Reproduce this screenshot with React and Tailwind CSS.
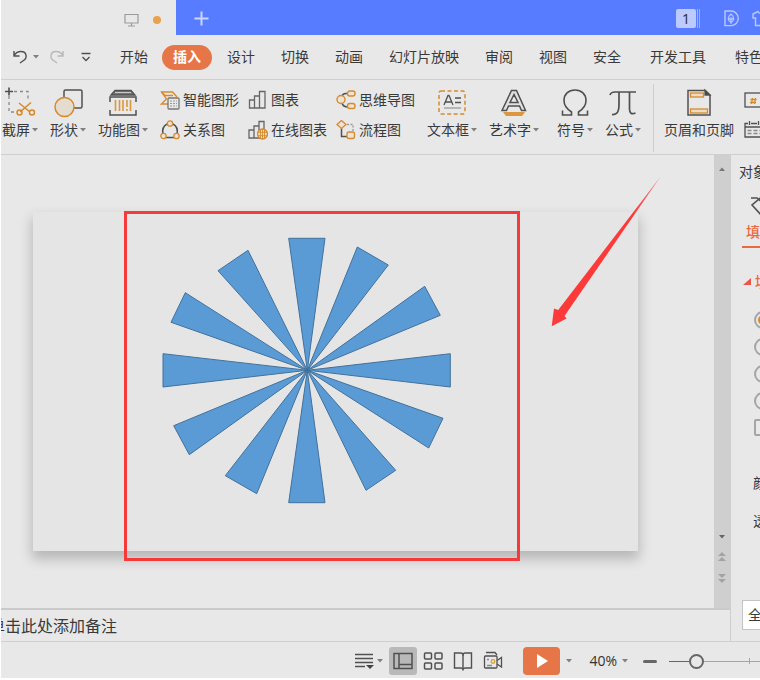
import React from "react";

const menuTabs = ["设计", "切换", "动画", "幻灯片放映", "审阅", "视图", "安全"];

const blades = [
  "255.7,26.3 292,26.3",
  "324.3,35 355.3,53",
  "391.7,74.3 407.3,103.3",
  "417.3,141.7 417.3,175",
  "410,206.3 395.7,236",
  "362.7,258.3 333,278.3",
  "292,290.7 255.7,290.7",
  "223.7,281.7 192.3,263.7",
  "156.3,242.7 140.7,213.7",
  "130,175 130,141.7",
  "138,110.3 152.3,80.7",
  "185,58.7 215,38.3",
];

const Caret = ({ className = "text-[#808080]" }) => (
  <svg width="6" height="4" viewBox="0 0 6 4" className={`shrink-0 ${className}`}>
    <path d="M0 0h6L3 3.5z" fill="currentColor" />
  </svg>
);

const Icon = ({ w = 32, h = 32, children, className = "" }) => (
  <svg
    width={w}
    height={h}
    viewBox={`0 0 ${w} ${h}`}
    fill="none"
    stroke="#505050"
    strokeWidth="1.3"
    className={`shrink-0 ${className}`}
  >
    {children}
  </svg>
);

const BigTool = ({ label, caret = true, children }) => (
  <button className="flex shrink-0 flex-col items-center whitespace-nowrap">
    {children}
    <span className="flex h-6 items-center gap-[2px]">
      {label}
      {caret && <Caret />}
    </span>
  </button>
);

const SmallTool = ({ label, children }) => (
  <button className="flex h-6 items-center gap-[3px] whitespace-nowrap">
    {children}
    {label}
  </button>
);

const TitleBar = () => (
  <header className="flex h-[35px] shrink-0 overflow-hidden bg-[#587cff]">
    <div className="flex w-[175px] shrink-0 items-center justify-end gap-[14px] bg-[#e8e8e8] pt-1 pr-[15px]">
      <Icon w={15} h={14}>
        <path d="M1 1.500h13v8.500h-13zM7.500 10v3M4 13h7" stroke="#9b9b9b" strokeWidth="1.200" />
      </Icon>
      <span className="size-2 rounded-full bg-[#e9a04f]" />
    </div>
    <button aria-label="新建" className="px-[18px] pt-[2px]">
      <Icon w={15} h={15}>
        <path d="M7.500 .5v14M.5 7.500h14" stroke="#c9d5ff" strokeWidth="2" />
      </Icon>
    </button>
    <div className="ml-auto flex items-center gap-6 pt-[2px]">
      <button className="flex items-center gap-px text-sm text-[#333]">
        <span className="flex h-[19px] w-5 items-center justify-center rounded-[2px] bg-[#bccafe]">1</span>
        <span className="h-[19px] w-px bg-[#9bb0ff]" />
        <span className="h-[19px] w-px bg-[#9bb0ff]" />
      </button>
      <div className="flex gap-[13px]">
        <Icon w={15} h={17}>
          <g stroke="#b9c8ff" strokeWidth="1.400">
            <path d="M1 1h6a7.300 7.300 0 0 1 0 14.600H1z" />
            <path d="M7 4c4 3.500 3.500 6.500 0 8.500C3.500 10.500 3 7.500 7 4zM7 7v7M4.500 8l2.500 2 2.500-2" strokeWidth="1.100" />
          </g>
        </Icon>
        <Icon w={8} h={17}>
          <path d="M9 3.500Q7 3.500 6 1.500L1 4v4h2.500v7.500H9" stroke="#b9c8ff" strokeWidth="1.400" />
        </Icon>
      </div>
    </div>
  </header>
);

const MenuBar = () => (
  <nav className="flex h-[45px] shrink-0 items-center overflow-hidden border-b border-[#cfcfcf] text-sm whitespace-nowrap">
    <div className="flex w-[119px] shrink-0 items-center pl-[11px]">
      <button aria-label="撤销">
        <Icon w={16} h={14}>
          <path d="M2 1v5h5.500M2 6Q4 1.500 9 1.500c6 0 6.500 6.500 2.500 9L8 13" strokeWidth="1.400" />
        </Icon>
      </button>
      <Caret className="ml-[5px] text-[#808080]" />
      <button aria-label="重做" className="ml-[10px]">
        <Icon w={16} h={14}>
          <path d="M14 1v5H8.500M14 6Q12 1.500 7 1.500c-6 0-6.500 6.500-2.500 9L8 13" stroke="#b8b8b8" strokeWidth="1.400" />
        </Icon>
      </button>
      <button aria-label="更多" className="ml-4">
        <Icon w={10} h={10}>
          <path d="M.5 1.500h9M1.500 5L5 8.500 8.500 5" strokeWidth="1.400" />
        </Icon>
      </button>
    </div>
    <button className="mr-[14px]">开始</button>
    <button className="mr-[2px] h-[25px] rounded-full bg-[#e67548] px-[11px] font-bold text-white">插入</button>
    {menuTabs.map((tab) => (
      <button key={tab} className="shrink-0 px-[13px]">
        {tab}
      </button>
    ))}
    <button className="shrink-0 px-4">开发工具</button>
    <button className="shrink-0 px-[13px]">特色</button>
  </nav>
);

const Ribbon = () => (
  <div className="flex h-[75px] shrink-0 items-start gap-3 overflow-hidden border-b border-[#cfcfcf] pt-[6px] pl-px text-sm">
    <BigTool label="截屏">
      <Icon>
        <path d="M5 1.500v8M1 5.500h8" strokeWidth="1.600" />
        <path d="M10 5.500h14v10M5 10v16h6" stroke="#8a8a8a" strokeDasharray="3 3" />
        <g stroke="#d58a2c" strokeWidth="1.500">
          <path d="M15 17l11 9M27 16.500L16 26" />
          <circle cx="15.500" cy="26.500" r="2.500" />
          <circle cx="28" cy="26.500" r="2.500" />
        </g>
      </Icon>
    </BigTool>
    <BigTool label="形状">
      <Icon>
        <rect x="12" y="4" width="18" height="18" rx="1.500" strokeWidth="1.500" />
        <circle cx="12.500" cy="21" r="9.500" fill="#e5dbcf" stroke="#d58a2c" strokeWidth="1.500" />
      </Icon>
    </BigTool>
    <BigTool label="功能图">
      <Icon>
        <path d="M4 9l4-4.500h16L28 9z" fill="#777" />
        <path d="M8 6.500h16" stroke="#ddd" strokeWidth=".8" />
        <path d="M3 16v-5h26v5M3 24v5h26v-5" strokeWidth="1.500" />
        <path d="M8.500 14v11M12.500 14v11M16 14v11M20 14v7M20 23v2M23.500 14v11" stroke="#dc963f" strokeWidth="1.600" />
      </Icon>
    </BigTool>

    <div className="flex flex-col gap-[6px] pt-[2px]">
      <SmallTool label="智能图形">
        <Icon w={20} h={20}>
          <path d="M8 14H1.500l5-5-5-7h11l4.500 5" stroke="#d58a2c" />
          <path d="M1.500 2L5 5.500h8" stroke="#d58a2c" />
          <rect x="8" y="8" width="11" height="11" rx="1" fill="#e8e8e8" stroke="#777" />
          <path d="M10 11h7M10 13.500h7M10 16h7" stroke="#999" strokeWidth="1" strokeDasharray="2 1" />
        </Icon>
      </SmallTool>
      <SmallTool label="关系图">
        <Icon w={20} h={20}>
          <path d="M7 4Q1.500 7 3 14M13 4q5.500 3 4 10M6 17.500h8" strokeWidth="1.500" />
          <g fill="#ece2d6" stroke="#d58a2c">
            <circle cx="10" cy="3.500" r="2.700" />
            <circle cx="3.500" cy="16" r="2.700" />
            <circle cx="16.500" cy="16" r="2.700" />
          </g>
        </Icon>
      </SmallTool>
    </div>
    <div className="-ml-[3px] flex flex-col gap-[6px] pt-[2px]">
      <SmallTool label="图表">
        <Icon w={20} h={20}>
          <path d="M1.500 10h5v8h-5zM6.500 6h5v12h-5zM11.500 1.500h5.500v16.500h-5.500z" stroke="#666" />
        </Icon>
      </SmallTool>
      <SmallTool label="在线图表">
        <Icon w={20} h={20}>
          <path d="M1 10h5v8H1zM6 6h5v12H6zM11 1.500h5V18h-5z" stroke="#666" />
          <circle cx="14.500" cy="14" r="5" fill="#efe0cc" stroke="#d58a2c" />
          <path d="M10 12.300h9M10 15.700h9M14.500 9v10M12.500 10v8M16.500 10v8" stroke="#d58a2c" strokeWidth=".9" />
        </Icon>
      </SmallTool>
    </div>
    <div className="-ml-[3px] flex flex-col gap-[6px] pt-[2px]">
      <SmallTool label="思维导图">
        <Icon w={20} h={20}>
          <path d="M6 6Q7 3 11 3.500M6 13q1 4 6 4" strokeWidth="1.500" />
          <g fill="#ece2d6" stroke="#d58a2c" strokeWidth="1.400">
            <circle cx="5" cy="9.500" r="4" />
            <rect x="11.500" y="1" width="7.500" height="5" rx="2.200" />
            <rect x="11.500" y="13.500" width="7.500" height="5" rx="2.200" />
          </g>
        </Icon>
      </SmallTool>
      <SmallTool label="流程图">
        <Icon w={20} h={20}>
          <path d="M5.500 8v8.500H11" strokeWidth="1.500" />
          <path d="M11 4.500h6V11" stroke="#999" strokeDasharray="2 1.500" />
          <g fill="#ece2d6" stroke="#d58a2c" strokeWidth="1.300">
            <path d="M5.500 .5l4.500 4-4.500 4-4.500-4z" />
            <rect x="11" y="12" width="7.500" height="6.500" rx="2" />
          </g>
        </Icon>
      </SmallTool>
    </div>

    <BigTool label="文本框">
      <Icon>
        <rect x="3" y="5" width="26" height="23" rx="2" stroke="#d58a2c" strokeWidth="1.500" strokeDasharray="4 2.500" />
        <path d="M8 19l4-9.500h1L17 19M9.500 16h6M19 12h6M19 16.500h6" />
        <path d="M8 22h17" stroke="#999" />
      </Icon>
    </BigTool>
    <BigTool label="艺术字">
      <Icon>
        <path d="M4 24.500L13.500 4.500h5L27.500 24.500h-4L21.500 20h-11L8.500 24.500zM16 8.500L12 16.500h8z" fill="#e1e1e1" strokeWidth="1.500" />
        <path d="M5 26h22l-3 4H8z" fill="#dc963f" stroke="none" />
      </Icon>
    </BigTool>
    <div className="flex gap-3 pl-[6px]">
      <BigTool label="符号">
        <Icon>
          <path d="M3.500 24.500v4.500h9v-3C7 22.500 5 18.500 5 14.500 5 8 9.500 4 16 4s11 4 11 10.500c0 4-2 8-7.500 11.500v3h9v-4.500" strokeWidth="1.600" />
        </Icon>
      </BigTool>
      <BigTool label="公式">
        <Icon>
          <path d="M3 9Q4 6 8 6h21M12 6v12c0 8-2 11-7 10.500M22.500 6v17q0 6.500 6 4" strokeWidth="1.700" />
        </Icon>
      </BigTool>
    </div>

    <div className="-mt-[2px] h-[68px] w-px shrink-0 bg-[#cfcfcf]" />

    <div className="-ml-[2px] flex">
      <BigTool label="页眉和页脚" caret={false}>
        <Icon>
          <path d="M5 4.500h17L27 9v20H5z" strokeWidth="1.500" />
          <path d="M22 4v5h5z" fill="#444" />
          <rect x="7.500" y="7" width="13" height="4" fill="#ecdcc7" stroke="#d58a2c" />
          <rect x="7.500" y="23" width="17" height="4" fill="#ecdcc7" stroke="#d58a2c" />
        </Icon>
      </BigTool>
    </div>
    <div className="-ml-[2px] flex flex-col gap-[6px] pt-[2px]">
      <button aria-label="幻灯片编号" className="flex h-6 items-center">
        <Icon w={20} h={18}>
          <rect x="1" y="2" width="18" height="14" />
          <path d="M6.500 8.500h6M6 11.500h6M8.500 7l-1 6M11.500 7l-1 6" stroke="#d58a2c" />
        </Icon>
      </button>
      <button aria-label="日期和时间" className="flex h-6 items-center">
        <Icon w={20} h={20}>
          <path d="M4 3.500H1V17h18V3.500h-3M7 3.500h6M5.500 1v4M14.500 1v4M1 7h18" />
          <path d="M3.500 10.500h13M3.500 13.500h13" stroke="#888" strokeDasharray="4 2" />
        </Icon>
      </button>
    </div>
  </div>
);

const Slide = () => (
  <div className="relative aspect-[605/339] bg-[#e5e5e5] shadow-[0_7px_12px_1px_rgba(0,0,0,0.22)]">
    <svg viewBox="0 0 605 339" className="w-full overflow-visible">
      <defs>
        <linearGradient id="tail" x1="1" y1="0" x2="0" y2="1">
          <stop offset="0" stopColor="#fc3a39" stopOpacity=".6" />
          <stop offset=".25" stopColor="#fc3a39" />
        </linearGradient>
      </defs>
      <g fill="#5b9bd5" stroke="#41719c" strokeWidth="1" strokeLinejoin="round">
        {blades.map((edge) => (
          <polygon key={edge} points={`274.3,158.3 ${edge}`} />
        ))}
      </g>
      <path d="M628-36L531.500 104l2.100 2.500-14.900 7.800L521 96.500l4.200 1.500z" fill="url(#tail)" />
    </svg>
    {/* red highlight frame around the drawn shape */}
    <div className="absolute -top-px left-[91px] h-[350px] w-[396px] border-3 border-[#f53b3a]" />
  </div>
);

const ScrollBar = () => (
  <div className="flex w-4 shrink-0 flex-col items-center bg-[#cfcfcf] pt-3 pb-6">
    <Caret className="rotate-180 text-[#777]" />
    <Caret className="mt-auto text-[#666]" />
    <Icon w={8} h={10} className="mt-[13px]">
      <path d="M0 4l4-4 4 4zM0 9l4-4 4 4z" fill="#a3a3a3" stroke="none" />
    </Icon>
    <Icon w={8} h={10} className="mt-3">
      <path d="M0 0h8L4 4zM0 5h8L4 9z" fill="#a3a3a3" stroke="none" />
    </Icon>
  </div>
);

const fillKinds = ["纯色填充", "渐变填充", "图片或纹理填充", "图案填充"];

const SidePanel = () => (
  <aside className="w-[30px] shrink-0 overflow-hidden border-l border-[#cfcfcf] pt-[7px] pl-2 text-sm whitespace-nowrap">
    <h2 className="h-5 leading-5">对象</h2>
    <Icon w={24} h={24} className="mt-3 ml-3">
      <path d="M0 4h6L18 14M13 1L1 11l10 11" strokeWidth="1.600" />
    </Icon>
    <div className="ml-[3px] flex h-[30px] w-14 items-center border-b-2 border-[#e8683f] pl-1 font-medium text-[#e8683f]">
      填充
    </div>
    <div className="mt-6 flex items-center gap-1 pl-1 font-medium text-[#e8683f]">
      <svg width="8" height="8" viewBox="0 0 8 8" className="shrink-0">
        <path d="M8 0v7H0z" fill="#ea5548" />
      </svg>
      填充
    </div>
    <div className="mt-[19px] flex flex-col gap-[9px] pl-[15px]">
      {fillKinds.map((kind, i) => (
        <input
          key={kind}
          type="radio"
          name="fill"
          aria-label={kind}
          defaultChecked={i === 0}
          className="size-[18px] shrink-0 appearance-none rounded-full border-2 border-[#a5a5a5] bg-clip-content p-[2px] checked:bg-[#d58a2c]"
        />
      ))}
      <input
        type="checkbox"
        aria-label="隐藏背景图形"
        className="size-[17px] shrink-0 appearance-none rounded-[2px] border-2 border-[#a5a5a5]"
      />
    </div>
    <p className="mt-[37px] pl-[14px]">颜色</p>
    <p className="mt-[18px] pl-[14px]">透明度</p>
    <button className="mt-[69px] ml-[3px] h-[30px] border border-[#c4c4c4] bg-white px-[5px]">全部应用</button>
  </aside>
);

const StatusBar = () => (
  <footer className="flex h-[37px] shrink-0 items-center justify-end overflow-hidden border-t border-[#cfcfcf] pt-[2px] text-sm">
    <button aria-label="备注" className="flex items-center gap-[2px]">
      <Icon w={20} h={18}>
        <path d="M0 2.500h18M0 6.500h18M0 10.500h18M0 14.500h10" strokeWidth="1.500" />
        <path d="M11 13h8l-4 4z" fill="#444" stroke="none" />
      </Icon>
      <Caret />
    </button>
    <button aria-label="普通视图" className="ml-[6px] rounded-[3px] bg-[#b9b9b9] p-1">
      <Icon w={20} h={20}>
        <path d="M1 2.500h18v15H1zM6 2.500v15M6 13.500h13" strokeWidth="1.500" />
      </Icon>
    </button>
    <button aria-label="幻灯片浏览" className="ml-[6px]">
      <Icon w={20} h={20}>
        <g strokeWidth="1.500">
          <rect x="1.500" y="2" width="7" height="6" rx="1" />
          <rect x="12" y="2" width="7" height="6" rx="1" />
          <rect x="1.500" y="12" width="7" height="6" rx="1" />
          <rect x="12" y="12" width="7" height="6" rx="1" />
        </g>
      </Icon>
    </button>
    <button aria-label="阅读视图" className="ml-[10px]">
      <Icon w={20} h={20}>
        <path d="M10 3.500Q9.500 2 8 2H1.500v15H8q1.500 0 2 1.500.5-1.500 2-1.500h6.500V2H12q-1.500 0-2 1.500z" strokeWidth="1.400" />
        <path d="M10 3v15" strokeWidth="1.400" />
      </Icon>
    </button>
    <button aria-label="录制" className="ml-[10px]">
      <Icon w={21} h={20}>
        <path d="M3 1.500h9l2 2.500" />
        <rect x="1.500" y="5" width="12.500" height="12" rx="1" />
        <path d="M14 9.500l4.500-3v9.500l-4.500-3" />
        <path d="M4 8.500h2M4 14.500h5" stroke="#888" />
        <circle cx="10" cy="10.500" r="1.800" stroke="#d5a12c" />
      </Icon>
    </button>
    <button aria-label="放映" className="ml-[19px] flex h-7 w-[37px] items-center justify-center rounded-[4px] bg-[#e67548]">
      <svg width="12" height="14" viewBox="0 0 12 14">
        <path d="M1 0l11 7-11 7z" fill="#fff" />
      </svg>
    </button>
    <Caret className="ml-[6px] text-[#808080]" />
    <button className="ml-[17px] flex items-center gap-[5px] font-['Open_Sans','Noto_Sans',sans-serif] text-[#333]">
      40%
      <Caret />
    </button>
    <button aria-label="缩小" className="ml-[15px] h-[3px] w-[14px] rounded-full bg-[#666]" />
    <label className="relative ml-3 flex h-5 w-[91px] shrink-0 items-center">
      <span className="absolute left-0 h-px w-5 bg-[#666]" />
      <span className="absolute right-0 left-5 h-px bg-[#a5a5a5]" />
      <span className="absolute right-[10px] h-[6px] w-px bg-[#a5a5a5]" />
      <input
        type="range"
        aria-label="缩放"
        defaultValue="26"
        className="relative h-5 w-full appearance-none bg-transparent [&::-webkit-slider-thumb]:size-[15px] [&::-webkit-slider-thumb]:appearance-none [&::-webkit-slider-thumb]:rounded-full [&::-webkit-slider-thumb]:border-2 [&::-webkit-slider-thumb]:border-[#666] [&::-webkit-slider-thumb]:bg-[#e8e8e8]"
      />
    </label>
  </footer>
);

export default function App() {
  return (
    <div className="flex min-h-screen flex-col overflow-hidden bg-white pb-[2px] pl-px font-['Noto_Sans','Noto_Sans_CJK_SC',sans-serif] text-[#3a3a3a]">
      <div className="flex flex-1 flex-col bg-[#e8e8e8]">
        <TitleBar />
        <MenuBar />
        <Ribbon />
        <div className="flex flex-1">
          <div className="flex min-w-0 flex-1 flex-col">
            <main className="flex flex-1">
              <div className="min-w-0 flex-1 pt-[57px] pr-[76px] pb-14 pl-8">
                <Slide />
              </div>
              <ScrollBar />
            </main>
            <div className="flex h-[33px] shrink-0 items-center overflow-hidden border-t-2 border-[#cacaca]">
              <p className="-ml-3 whitespace-nowrap">单击此处添加备注</p>
            </div>
          </div>
          <SidePanel />
        </div>
        <StatusBar />
      </div>
    </div>
  );
}
